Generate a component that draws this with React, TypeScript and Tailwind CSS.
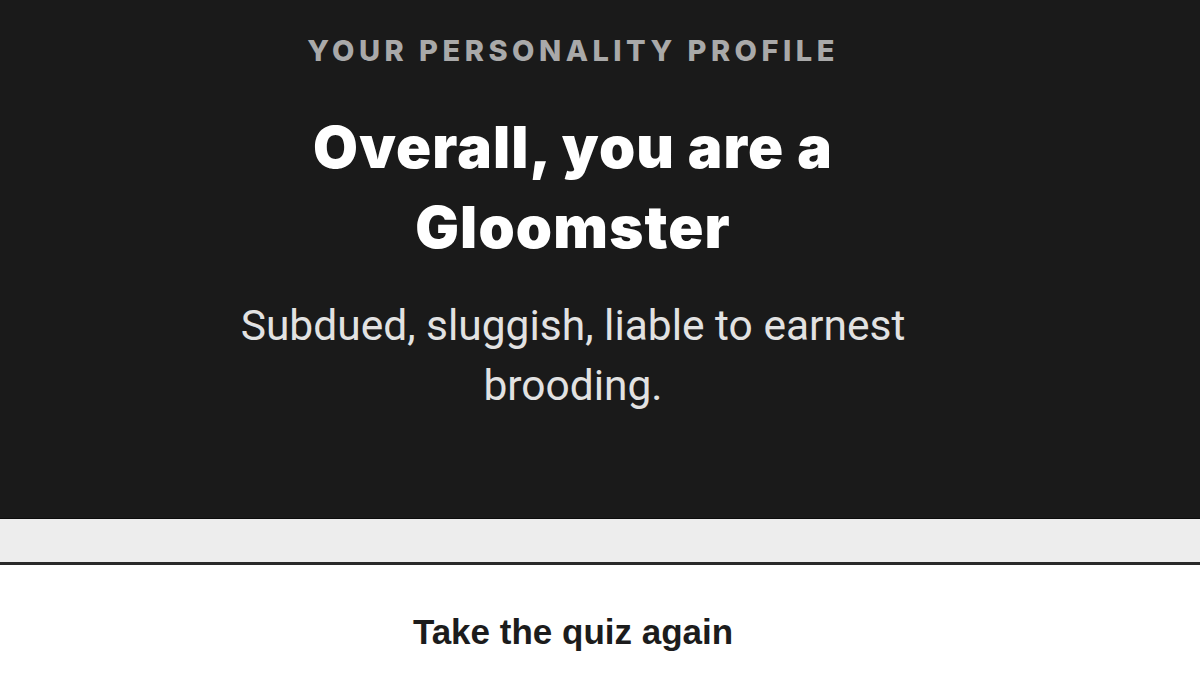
export default function App() {
  return (
    <div className="w-[1200px] h-[675px] overflow-hidden bg-white flex flex-col" style={{ fontFamily: "Inter, 'Noto Sans', sans-serif" }}>
      <div className="h-[518px] w-[1200px] bg-[#1a1a1a] flex flex-col items-center shrink-0 pt-[29px] pr-[54px]">
        <div className="text-[29px] leading-[44px] font-extrabold tracking-[0.155em] text-[#a9a9a9] uppercase whitespace-nowrap">Your personality profile</div>
        <h1 className="mt-[34px] text-[58px] leading-[80px] font-black tracking-[0.02em] text-white text-center w-[760px]">
          Overall, you are a<br />Gloomster
        </h1>
        <p className="mt-[29px] text-[42.5px] leading-[60px] text-[#e2e2e2] text-center w-[760px]" style={{ fontFamily: "Roboto, 'Liberation Sans', sans-serif" }}>
          Subdued, sluggish, liable to earnest<br />brooding.
        </p>
      </div>
      <div className="h-[1px] bg-[#0c0c0c]" />
      <div className="h-[46px] bg-[#ededed] border-b-[3px] border-[#2a2a2a]" />
      <div className="flex justify-center pr-[54px] pt-[41px]">
        <button className="text-[35px] font-bold text-[#1c1c1c]" style={{ fontFamily: "'Liberation Sans', Arial, sans-serif" }}>
          Take the quiz again
        </button>
      </div>
    </div>
  );
}
